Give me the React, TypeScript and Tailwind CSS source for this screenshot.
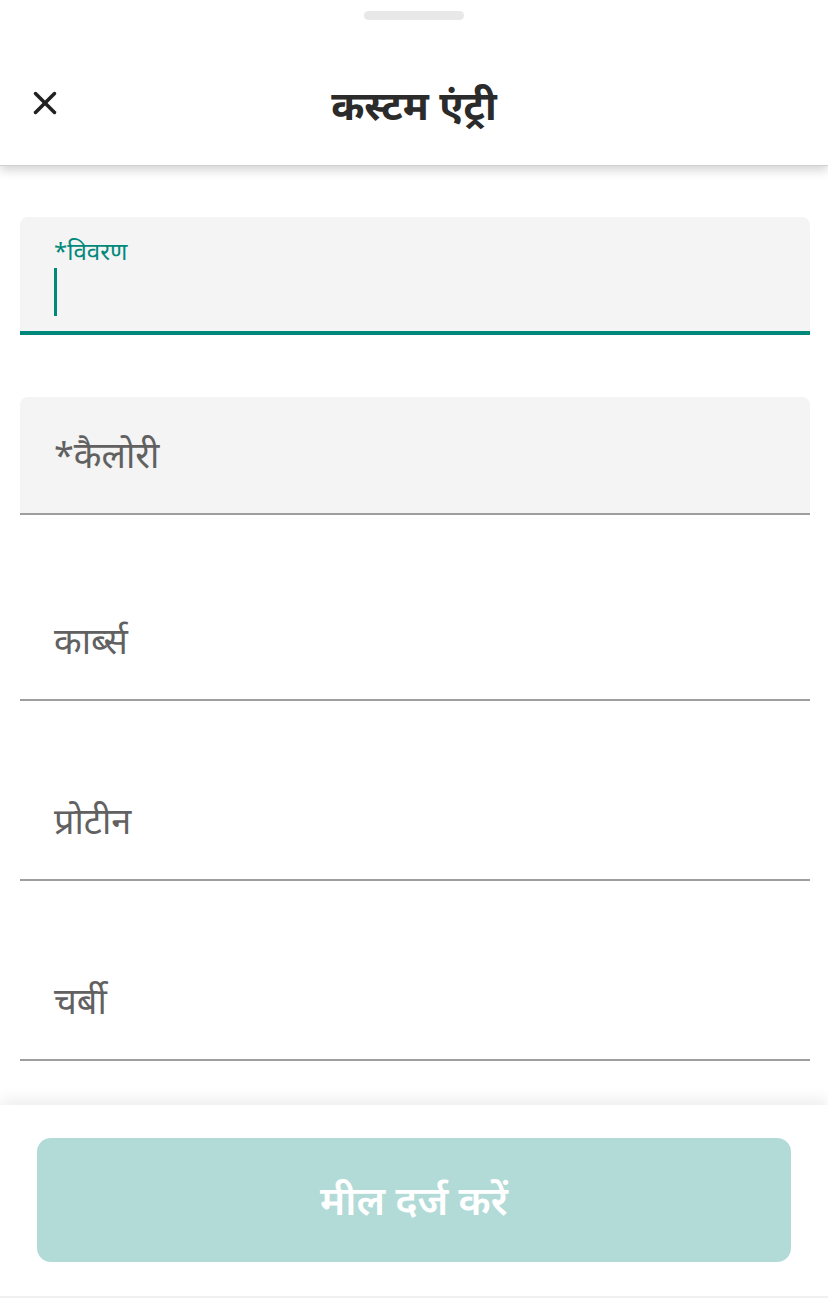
import { X } from "lucide-react";

const font = { fontFamily: '"Noto Sans", "Noto Sans Devanagari", sans-serif' };

function FilledField({ label, focused }: { label: string; focused?: boolean }) {
  return (
    <div
      className={
        "h-[118px] bg-[#f4f4f4] rounded-t-[8px] px-[34px] flex flex-col " +
        (focused ? "border-b-4 border-[#00897b] justify-start pt-[18px]" : "border-b-2 border-[#9e9e9e] justify-center")
      }
    >
      {focused ? (
        <>
          <span className="text-[24px] leading-[32px] text-[#00897b]">{label}</span>
          <span className="mt-[1px] w-[3px] h-[48px] bg-[#00897b]" />
        </>
      ) : (
        <span className="text-[36px] text-[#616161]">{label}</span>
      )}
    </div>
  );
}

function PlainField({ label, first }: { label: string; first?: boolean }) {
  return (
    <div
      className={
        "h-[118px] px-[34px] flex items-center border-b-2 border-[#9e9e9e] " + (first ? "mt-[6px]" : "")
      }
    >
      <span className="text-[36px] text-[#616161]">{label}</span>
    </div>
  );
}

export default function App() {
  return (
    <div className="w-[828px] h-[1298px] bg-white flex flex-col overflow-hidden" style={font}>
      {/* Header */}
      <div className="relative z-10 h-[166px] bg-white shadow-[0_4px_10px_rgba(0,0,0,0.18)] border-b border-[#d0d0d0] flex flex-col">
        <div className="flex justify-center pt-[11px]">
          <div className="w-[100px] h-[9px] rounded-full bg-[#e8e8e8]" />
        </div>
        <div className="flex-1 flex items-center relative pt-[24px]">
          <button className="absolute left-[26px] top-[64px] text-[#212121]">
            <X size={38} strokeWidth={2.2} />
          </button>
          <h1 className="w-full text-center text-[40px] font-bold text-[#2b2b2b]">कस्टम एंट्री</h1>
        </div>
      </div>

      {/* Form */}
      <div className="flex-1 pl-[20px] pr-[18px] pt-[51px] flex flex-col gap-[62px]">
        <FilledField label="*विवरण" focused />
        <FilledField label="*कैलोरी" />
        <PlainField label="कार्ब्स" first />
        <PlainField label="प्रोटीन" />
        <PlainField label="चर्बी" />
      </div>

      {/* Footer */}
      <div className="relative h-[193px] bg-white shadow-[0_-6px_14px_rgba(0,0,0,0.07)] border-b-2 border-[#f0f0f0] px-[37px] pt-[33px]">
        <button className="w-full h-[124px] rounded-[14px] bg-[#b2dbd7] text-white text-[40px] font-semibold">
          मील दर्ज करें
        </button>
      </div>
    </div>
  );
}
